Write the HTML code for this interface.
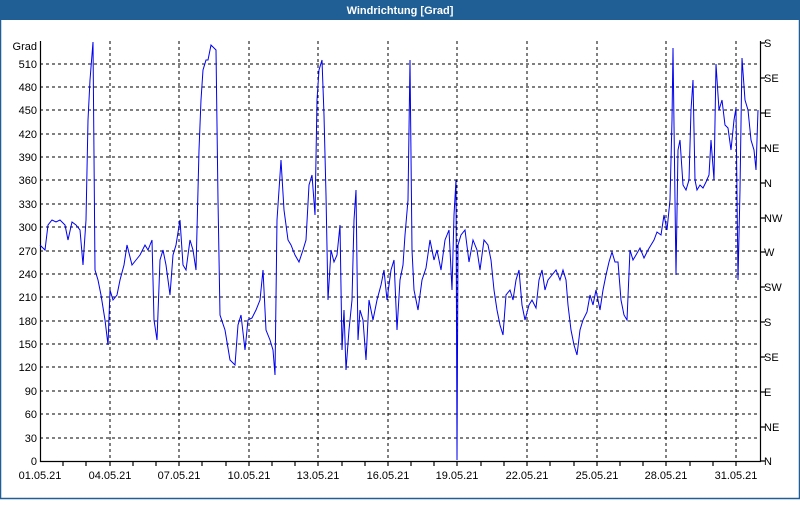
<!DOCTYPE html><html><head><style>
body{margin:0;width:800px;height:500px;overflow:hidden;background:#fff;font-family:"Liberation Sans",sans-serif}
</style></head><body>
<svg width="800" height="500" xmlns="http://www.w3.org/2000/svg" font-family="Liberation Sans, sans-serif" font-size="11">
<rect x="0" y="0" width="800" height="500" fill="#fff"/>
<rect x="0.5" y="0.5" width="799" height="498" fill="none" stroke="#1f5f96" stroke-width="1.5"/>
<rect x="0" y="0" width="800" height="20" fill="#1f5f96"/>
<text x="400" y="14" fill="#fff" font-weight="bold" text-anchor="middle">Windrichtung [Grad]</text>
<g stroke="#000" stroke-dasharray="3,3" stroke-width="1">
<line x1="40" y1="64" x2="760" y2="64"/><line x1="40" y1="87" x2="760" y2="87"/><line x1="40" y1="110" x2="760" y2="110"/><line x1="40" y1="134" x2="760" y2="134"/><line x1="40" y1="157" x2="760" y2="157"/><line x1="40" y1="180" x2="760" y2="180"/><line x1="40" y1="204" x2="760" y2="204"/><line x1="40" y1="227" x2="760" y2="227"/><line x1="40" y1="251" x2="760" y2="251"/><line x1="40" y1="274" x2="760" y2="274"/><line x1="40" y1="297" x2="760" y2="297"/><line x1="40" y1="321" x2="760" y2="321"/><line x1="40" y1="344" x2="760" y2="344"/><line x1="40" y1="367" x2="760" y2="367"/><line x1="40" y1="391" x2="760" y2="391"/><line x1="40" y1="414" x2="760" y2="414"/><line x1="40" y1="438" x2="760" y2="438"/>
<line x1="110" y1="41" x2="110" y2="461"/><line x1="179" y1="41" x2="179" y2="461"/><line x1="249" y1="41" x2="249" y2="461"/><line x1="318" y1="41" x2="318" y2="461"/><line x1="388" y1="41" x2="388" y2="461"/><line x1="457" y1="41" x2="457" y2="461"/><line x1="527" y1="41" x2="527" y2="461"/><line x1="597" y1="41" x2="597" y2="461"/><line x1="666" y1="41" x2="666" y2="461"/><line x1="736" y1="41" x2="736" y2="461"/>
</g>
<g stroke="#000" stroke-width="1.2" fill="none">
<path d="M40.5 41V461.5H760.5V41"/>
<path d="M63 461v5M86 461v5M110 461v5M133 461v5M156 461v5M179 461v5M202 461v5M226 461v5M249 461v5M272 461v5M295 461v5M318 461v5M342 461v5M365 461v5M388 461v5M411 461v5M434 461v5M457 461v5M481 461v5M504 461v5M527 461v5M550 461v5M574 461v5M597 461v5M620 461v5M643 461v5M666 461v5M690 461v5M713 461v5M736 461v5"/>
<path d="M760 43h5M760 78h5M760 113h5M760 148h5M760 183h5M760 218h5M760 252h5M760 287h5M760 322h5M760 357h5M760 392h5M760 427h5M760 461h5"/>
</g>
<g text-anchor="end" fill="#000">
<text x="37" y="50">Grad</text><text x="37" y="68">510</text><text x="37" y="91">480</text><text x="37" y="114">450</text><text x="37" y="138">420</text><text x="37" y="161">390</text><text x="37" y="184">360</text><text x="37" y="208">330</text><text x="37" y="231">300</text><text x="37" y="255">270</text><text x="37" y="278">240</text><text x="37" y="301">210</text><text x="37" y="325">180</text><text x="37" y="348">150</text><text x="37" y="371">120</text><text x="37" y="395">90</text><text x="37" y="418">60</text><text x="37" y="442">30</text><text x="37" y="465">0</text>
</g>
<g fill="#000">
<text x="764" y="47">S</text><text x="764" y="82">SE</text><text x="764" y="117">E</text><text x="764" y="152">NE</text><text x="764" y="187">N</text><text x="764" y="222">NW</text><text x="764" y="256">W</text><text x="764" y="291">SW</text><text x="764" y="326">S</text><text x="764" y="361">SE</text><text x="764" y="396">E</text><text x="764" y="431">NE</text><text x="764" y="465">N</text>
</g>
<g text-anchor="middle" fill="#000">
<text x="40" y="479">01.05.21</text><text x="110" y="479">04.05.21</text><text x="179" y="479">07.05.21</text><text x="249" y="479">10.05.21</text><text x="318" y="479">13.05.21</text><text x="388" y="479">16.05.21</text><text x="457" y="479">19.05.21</text><text x="527" y="479">22.05.21</text><text x="597" y="479">25.05.21</text><text x="666" y="479">28.05.21</text><text x="736" y="479">31.05.21</text>
</g>
<polyline fill="none" stroke="#0000ee" stroke-width="1" points="40,245 45,250 48,225 52,220 56,222 60,220 65,225 68,240 72,222 76,225 80,230 83,265 86,220 88,120 90,80 93,42 95,270 98,280 101,295 105,320 108,345 110,290 113,300 117,295 120,280 124,265 127,245 132,265 136,260 140,255 145,245 148,250 152,240 154,320 157,340 160,260 163,250 166,265 170,295 173,255 176,245 180,220 183,265 186,270 190,240 193,250 196,270 199,150 201,100 203,70 206,60 208,60 211,45 216,50 218,200 220,315 225,330 230,360 235,365 238,325 241,315 245,350 248,320 252,318 256,310 260,300 263,270 266,330 270,340 273,350 275,375 277,220 279,190 281,160 284,210 288,240 291,245 295,255 299,262 303,250 306,240 309,185 312,175 315,215 317,100 319,70 322,60 324,115 326,195 328,300 331,250 334,262 337,255 340,225 342,350 344,310 346,370 349,330 352,300 354,220 356,190 358,340 360,310 363,320 366,360 369,300 373,320 377,300 381,285 384,270 387,300 391,270 394,260 397,330 400,280 403,265 405,235 408,200 410,60 412,250 414,290 418,310 422,280 426,268 430,240 434,260 437,250 441,270 445,240 449,230 452,290 454,215 456,180 457,460 458,245 461,235 465,230 469,262 473,240 477,250 480,270 484,240 488,245 491,260 494,290 497,310 500,325 503,335 506,295 510,290 513,300 516,280 519,270 522,305 525,320 529,305 532,300 536,308 539,280 542,270 545,290 548,280 552,275 556,270 560,280 563,270 566,280 568,305 571,330 574,345 577,355 580,330 583,320 587,312 590,295 593,305 596,290 600,310 603,290 606,275 609,262 612,252 615,262 618,262 621,300 624,315 627,320 630,250 633,260 636,255 640,248 644,258 648,250 651,245 654,240 657,232 661,235 664,215 667,230 670,200 672,120 673,48 675,200 676,275 678,150 680,140 683,185 686,190 689,180 691,110 693,80 695,180 697,190 700,185 703,188 706,182 709,175 711,140 714,180 716,64 719,110 722,100 725,125 728,128 731,150 734,120 736,108 738,280 740,190 742,58 745,100 748,110 751,140 754,150 756,170 758,110"/>
</svg>
</body></html>
